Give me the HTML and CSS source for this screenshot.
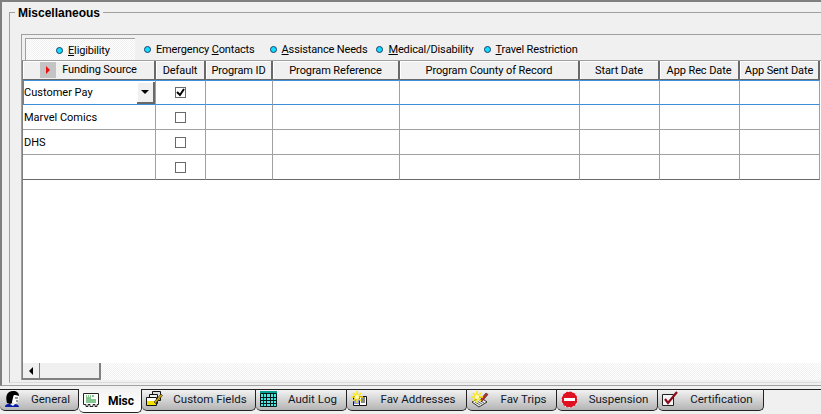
FILE: index.html
```html
<!DOCTYPE html>
<html lang="en">
  <head>
    <meta charset="UTF-8" />
    <title>Miscellaneous</title>
    <link rel="stylesheet" href="styles.css">
  </head>
  <body>
    <div class="window">
      <div class="pane">
        <div class="group">
          <h2 class="group-title">Miscellaneous</h2>
          <div class="panel">
            <!-- Sub tabs -->
            <div class="subtabs">
              <div class="subtab subtab-active"><span class="dot"></span><span><u>E</u>ligibility</span></div>
              <div class="subtab subtab-emergency"><span class="dot"></span><span>Emergency <u>C</u>ontacts</span></div>
              <div class="subtab subtab-assist"><span class="dot"></span><span><u>A</u>ssistance Needs</span></div>
              <div class="subtab subtab-medical"><span class="dot"></span><span><u>M</u>edical/Disability</span></div>
              <div class="subtab subtab-travel"><span class="dot"></span><span><u>T</u>ravel Restriction</span></div>
            </div>

            <!-- Grid -->
            <div class="grid-area">
              <table class="grid">
                <colgroup>
                  <col class="c-source" /><col class="c-default" /><col class="c-id" /><col class="c-ref" />
                  <col class="c-county" /><col class="c-date" /><col class="c-date" /><col class="c-date" />
                </colgroup>
                <thead>
                  <tr>
                    <th>
                      <span class="sort-mark"><span class="sort-arrow"></span></span>Funding Source
                    </th>
                    <th>Default</th>
                    <th>Program ID</th>
                    <th>Program Reference</th>
                    <th>Program County of Record</th>
                    <th>Start Date</th>
                    <th>App Rec Date</th>
                    <th>App Sent Date</th>
                  </tr>
                </thead>
                <tbody>
                  <tr class="current">
                    <td class="combo-cell">
                      <div class="combo"><span>Customer Pay</span><span class="combo-btn"><span class="combo-arrow"></span></span></div>
                    </td>
                    <td class="check-cell">
                      <span class="check">
                        <svg width="11" height="11" viewBox="0 0 11 11"><path d="M2 5l3 3 4-6" fill="none" stroke="#000" stroke-width="2" /></svg>
                      </span>
                    </td>
                    <td></td><td></td><td></td><td></td><td></td><td></td>
                  </tr>
                  <tr>
                    <td>Marvel Comics</td>
                    <td class="check-cell"><span class="check"></span></td>
                    <td></td><td></td><td></td><td></td><td></td><td></td>
                  </tr>
                  <tr>
                    <td>DHS</td>
                    <td class="check-cell"><span class="check"></span></td>
                    <td></td><td></td><td></td><td></td><td></td><td></td>
                  </tr>
                  <tr>
                    <td></td>
                    <td class="check-cell"><span class="check"></span></td>
                    <td></td><td></td><td></td><td></td><td></td><td></td>
                  </tr>
                </tbody>
              </table>
              <div class="grid-empty"></div>
              <div class="scrollbar">
                <div class="scroll-btn"><span class="scroll-arrow"></span></div>
                <div class="scroll-thumb"></div>
                <div class="scroll-track"></div>
              </div>
            </div>
          </div>
        </div>
      </div>

      <!-- Bottom tabs -->
      <div class="tabs">
        <div class="tab">
          <svg class="tab-icon" width="17" height="16" viewBox="0 0 17 16">
            <path d="M1 16c0-2 1-3 4-3h5c3 0 5 1 5 3z" fill="#0a1aa8" />
            <path d="M6 13l3 2 2-2z" fill="#fff" />
            <path d="M3 12C1 5 3 0 9 0c4 0 6 2 6 5l-5-1-1 3-1 5-2 1z" fill="#000" />
            <path d="M10 4l5 1v3l-1 3-3 2-3-1 1-5z" fill="#fff" />
            <path d="M11 7h3M12 10h2" stroke="#333" />
          </svg>
          <span class="tab-label">General</span>
        </div>
        <div class="tab tab-active">
          <svg class="tab-icon" width="16" height="14" viewBox="0 0 16 14">
            <path d="M.5.5h15v11h-1.500v2h-2v-2h-2v2h-3v-2h-2v2h-2v-2H.5z" fill="#fff" stroke="#222" />
            <path d="M3 3h1M5 3h1M7 3h1M9 3h2M3 5h5M3 7h10M3 9h10" stroke="#0a8a1e" />
          </svg>
          <span class="tab-label">Misc</span>
        </div>
        <div class="tab">
          <svg class="tab-icon" width="17" height="15" viewBox="0 0 17 15">
            <path d="M6.500.5h8v9h-8z" fill="#ddd" stroke="#111" />
            <path d="M3.500 3.500h8v9h-8z" fill="#eee" stroke="#111" />
            <path d="M.5 6.500h10v8H.5z" fill="#fff" stroke="#111" />
            <path d="M1 10h9v4H1z" fill="#f4e000" />
            <path d="M8 11l7-8 1.500 1.500-7 8z" fill="#c9a400" stroke="#222" stroke-width=".6" />
          </svg>
          <span class="tab-label">Custom Fields</span>
        </div>
        <div class="tab">
          <svg class="tab-icon" width="17" height="16" viewBox="0 0 17 16">
            <path d="M0 0h17v16H0z" fill="#40ece4" />
            <path d="M0 0h17v2H0z" fill="#08a090" />
            <path d="M.5 2.500h16v13H.5zM.5 6.500h16M.5 9.500h16M.5 12.500h16M3.500 2v14M6.500 2v14M10.500 2v14M13.500 2v14" fill="none" stroke="#0a1a1a" />
          </svg>
          <span class="tab-label">Audit Log</span>
        </div>
        <div class="tab">
          <svg class="tab-icon" width="17" height="16" viewBox="0 0 17 16">
            <path d="M2.500 5.500h6v9h-6zM8.500 5.500h7v9h-7z" fill="#fff" stroke="#111" />
            <path d="M3 8h5M3 10h5M3 12h5" stroke="#2030c0" />
            <path d="M10 7h4M10 9h4M10 11h4" stroke="#111" />
            <path d="M6 0v12M0 6h12M2 2l8 8M10 2l-8 8" stroke="#ffe800" stroke-width="1.500" />
            <circle cx="6" cy="6" r="2" fill="#fffbc0" />
          </svg>
          <span class="tab-label">Fav Addresses</span>
        </div>
        <div class="tab">
          <svg class="tab-icon" width="18" height="17" viewBox="0 0 18 17">
            <path d="M1 11l8-5 7 5-8 5z" fill="#eee" stroke="#333" />
            <path d="M4 11l5 3M6 10l5 3M8 9l5 3" stroke="#666" />
            <path d="M9 9l6-7 2 1.500-6 7z" fill="#c03030" stroke="#222" stroke-width=".6" />
            <path d="M6 0v12M0 6h12M2 2l8 8M10 2l-8 8" stroke="#ffe800" stroke-width="1.500" />
            <circle cx="6" cy="6" r="2" fill="#fffbc0" />
          </svg>
          <span class="tab-label">Fav Trips</span>
        </div>
        <div class="tab">
          <svg class="tab-icon" width="17" height="17" viewBox="0 0 17 17">
            <circle cx="8.500" cy="8.500" r="8" fill="#e01020" />
            <circle cx="8.500" cy="8.500" r="8" fill="none" stroke="#fff" stroke-width="1" stroke-dasharray="1.500 2.500" />
            <path d="M3 7h11v3H3z" fill="#fff" />
          </svg>
          <span class="tab-label">Suspension</span>
        </div>
        <div class="tab">
          <svg class="tab-icon" width="16" height="16" viewBox="0 0 16 16">
            <path d="M.5 3.500h11v11H.5z" fill="#f4f4f4" stroke="#222" />
            <path d="M3 8l3 4 9-11" fill="none" stroke="#8a0a1c" stroke-width="2.200" />
          </svg>
          <span class="tab-label">Certification</span>
        </div>
      </div>
    </div>
  </body>
</html>
```

FILE: styles.css
```css
body {
  margin: 0;
  background-color: #f0f0f0;
  color: #000;
  font-family: Roboto, "Liberation Sans", Arial, sans-serif;
  font-size: 11px;
  overflow: hidden;
}

.window {
  width: 821px;
  height: 414px;
  display: flex;
  flex-direction: column;
  overflow: hidden;
}

.pane {
  height: 373px;
  border-top: 2px solid #808080;
  border-left: 2px solid #808080;
  border-bottom: 1px solid #a0a0a0;
  padding: 10px 0 0 7px;
  margin-right: -2px;
  flex: none;
}

.group {
  height: 369px;
  border: 1px solid #a0a0a0;
  border-right: none;
  border-bottom-color: #dcdcdc;
  padding-left: 11px;
}

.group-title {
  width: fit-content;
  margin: -7px 0 0 -6px;
  padding: 0 3px;
  background-color: #f0f0f0;
  font-family: "Liberation Sans", Arial, sans-serif;
  font-size: 12px;
  line-height: 14px;
  font-weight: bold;
}

.panel {
  margin-top: 14px;
  border-top: 1px solid #a0a0a0;
  border-left: 1px solid #a0a0a0;
  height: 345px;
  display: flex;
  flex-direction: column;
}

/* sub tabs row */
.subtabs {
  display: flex;
  height: 25px;
  flex: none;
  padding-left: 3px;
  box-sizing: border-box;
  letter-spacing: -0.15px;
}

.subtab {
  display: flex;
  align-items: center;
  gap: 5px;
  padding-top: 3px;
  height: 25px;
  box-sizing: border-box;
}

.subtab-active {
  width: 110px;
  margin-top: 3px;
  height: 22px;
  padding: 1px 0 0 30px;
  border-top: 1px solid #a0a0a0;
  border-left: 1px solid #a0a0a0;
  background: repeating-conic-gradient(#f0f0f0 0 25%, #fff 0 50%) 0 0 / 2px 2px;
}

.subtab-emergency { margin-left: 9px; }
.subtab-assist { margin-left: 15px; }
.subtab-medical { margin-left: 9px; }
.subtab-travel { margin-left: 10px; }

.dot {
  width: 5px;
  height: 5px;
  border-radius: 50%;
  border: 1px solid #1a3a6a;
  background-color: #10e0ff;
}

/* grid */
.grid-area {
  flex: 1;
  min-height: 0;
  display: flex;
  flex-direction: column;
  background-color: #fff;
  border-left: 1px solid #808080;
  border-top: 1px solid #a0a0a0;
}

.grid {
  border-collapse: separate;
  border-spacing: 0;
  table-layout: fixed;
  width: 797px;
  flex: none;
}

.c-source { width: 133px; }
.c-default { width: 50px; }
.c-id { width: 67px; }
.c-ref { width: 127px; }
.c-county { width: 180px; }
.c-date { width: 80px; }

.grid th {
  height: 19px;
  padding: 0;
  box-sizing: border-box;
  background-color: #f0f0f0;
  border-right: 2px solid #696969;
  border-bottom: 1px solid #696969;
  box-shadow: inset 1px 1px 0 #fff;
  font-weight: normal;
  text-align: center;
  white-space: nowrap;
  letter-spacing: -0.1px;
}

.grid td {
  height: 25px;
  padding: 0 0 0 1px;
  box-sizing: border-box;
  border-right: 1px solid #a0a0a0;
  border-bottom: 1px solid #a0a0a0;
}

.grid .current td {
  border-top: 1px solid #3c8fd8;
  border-bottom: 1px solid #3c8fd8;
}

.grid tbody tr:last-child td {
  border-bottom-color: #696969;
}

.grid td.check-cell {
  padding: 3px 1px 0 0;
  text-align: center;
}

.check {
  display: inline-block;
  width: 9px;
  height: 9px;
  border: 1px solid #696969;
  background-color: #fff;
}

.check svg {
  display: block;
  margin: -1px;
}

.sort-mark {
  display: inline-flex;
  align-items: center;
  justify-content: center;
  width: 16px;
  height: 16px;
  margin-right: 6px;
  vertical-align: middle;
  background-color: #c4c4c4;
}

.sort-arrow {
  border-left: 4px solid #e81010;
  border-top: 4px solid transparent;
  border-bottom: 4px solid transparent;
}

.grid td.combo-cell {
  padding: 0;
  border-left: 1px solid #3c8fd8;
}

.combo {
  display: flex;
  align-items: center;
  justify-content: space-between;
}

.combo-btn {
  width: 16px;
  height: 20px;
  display: flex;
  align-items: center;
  justify-content: center;
  background-color: #f0f0f0;
  border-right: 2px solid #696969;
  border-bottom: 2px solid #696969;
  box-shadow: inset 1px 1px 0 #fff;
}

.combo-arrow {
  border-top: 4px solid #000;
  border-left: 4px solid transparent;
  border-right: 4px solid transparent;
}

.grid-empty {
  flex: 1;
  min-height: 0;
}

.scrollbar {
  height: 17px;
  flex: none;
  display: flex;
  background: repeating-conic-gradient(#f0f0f0 0 25%, #fff 0 50%) 0 0 / 2px 2px;
}

.scroll-btn {
  width: 16px;
  display: flex;
  align-items: center;
  justify-content: center;
  background-color: #f0f0f0;
  border-right: 1px solid #808080;
  border-bottom: 2px solid #808080;
}

.scroll-arrow {
  border-right: 4px solid #000;
  border-top: 4px solid transparent;
  border-bottom: 4px solid transparent;
}

.scroll-thumb {
  width: 59px;
  background-color: #f0f0f0;
  border-right: 2px solid #808080;
  border-bottom: 2px solid #808080;
}

.scroll-track {
  flex: 1;
}

/* bottom tabs */
.tabs {
  display: grid;
  grid-template-columns: 79px 63px 114px 91px 120px 90px 101px 106px;
  justify-content: start;
  height: 25px;
  margin-top: 3px;
  border-top: 1px solid #222;
  flex: none;
}

.tab {
  height: 21px;
  display: flex;
  align-items: flex-start;
  padding: 1px 0 0 4px;
  box-sizing: border-box;
  background: linear-gradient(#f2f2f2, #b4b4b4);
  border-right: 1px solid #222;
  border-bottom: 1px solid #222;
  border-bottom-left-radius: 5px;
  border-bottom-right-radius: 5px;
  font-size: 11.5px;
  color: #101828;
}

.tab-active {
  height: 24px;
  margin-top: -1px;
  padding-top: 4px;
  background: linear-gradient(#f4f4f4, #fff);
  font-size: 12px;
  font-weight: bold;
  color: #000;
}

.tab-icon {
  flex: none;
}

.tab-label {
  flex: 1;
  padding-left: 2px;
  text-align: center;
  line-height: 16px;
}
```
